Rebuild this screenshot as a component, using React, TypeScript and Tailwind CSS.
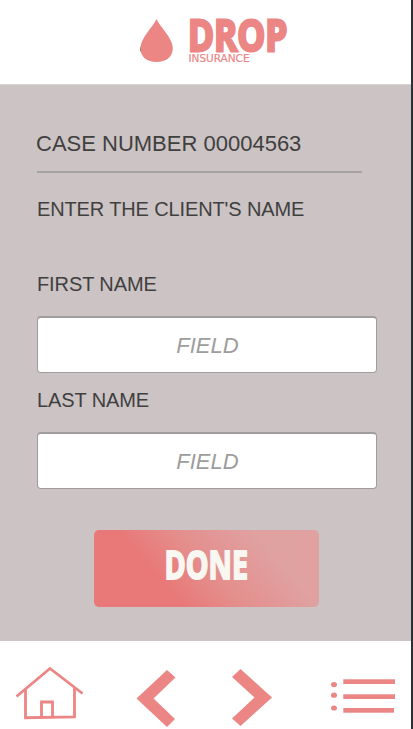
import React from "react";

const pink = "#eb8685";

function Logo() {
  return (
    <svg className="block h-[84px] w-full" viewBox="0 0 411 84" fill={pink}>
      <path d="M140.300 46v5l3 4z" fill="#444" />
      <path d="M156.500 19C160 27 172.800 38 172.800 48C172.800 57 166 62 156.500 62C147 62 140.500 57 140.500 48C140.500 38 153 27 156.500 19Z" />
      <text x="188" y="51.200" fontFamily="'Open Sans', sans-serif" fontWeight="700" fontSize="43.500" textLength="99.500" lengthAdjust="spacingAndGlyphs" stroke={pink} strokeWidth="2.800">DROP</text>
      <text x="188.500" y="62" fontFamily="'DejaVu Sans', sans-serif" fontSize="11" textLength="61" lengthAdjust="spacingAndGlyphs" stroke={pink} strokeWidth="0.2">INSURANCE</text>
    </svg>
  );
}

function Field({ label, className }: { label: string; className: string }) {
  return (
    <div className={className}>
      <label className="block h-6 text-[20px] leading-6 tracking-[-0.1px]">{label}</label>
      <input
        className="mt-5 block h-[57px] w-[340px] rounded-[4px] border border-t-2 border-[#a09c9d] bg-white pt-[2px] pl-[1px] text-center text-[22px] italic text-[#444] outline-none placeholder:text-[#9d9d9d] placeholder:opacity-100"
        placeholder="FIELD"
        aria-label={label}
      />
    </div>
  );
}

export default function App() {
  return (
    <div className="flex h-[729px] w-[413px] flex-col overflow-hidden border-r-2 border-[#2d3033] bg-white font-['Liberation_Sans',Arial,sans-serif] text-[#40403f]">
      <header className="h-[84px] shrink-0">
        <Logo />
      </header>
      <main className="h-[557px] shrink-0 border-t border-[#d8d1d1] bg-[#ccc3c4] pl-[37px]">
        <h1 className="mt-[45px] h-[43px] w-[325px] border-b-2 border-[#a5a4a3] text-[22px] leading-[28px] -indent-px">
          CASE NUMBER 00004563
        </h1>
        <p className="mt-[24px] h-6 text-[20px] leading-6 tracking-[-0.13px]">ENTER THE CLIENT'S NAME</p>
        <Field label="FIRST NAME" className="mt-[51px]" />
        <Field label="LAST NAME" className="mt-[15px]" />
        <button
          className="ml-[57px] mt-[41px] block h-[77px] w-[225px] rounded-[5px] bg-[linear-gradient(49deg,#e87978_0%,#e87978_31%,#e48e8c_50%,#e0a1a1_77%,#e0a1a1_100%)]"
          aria-label="Done"
        >
          <svg className="block" width="225" height="77" fill="#f8f7f2">
            <text x="70.500" y="49.200" fontFamily="'Open Sans', sans-serif" fontWeight="700" fontSize="39.500" textLength="83.500" lengthAdjust="spacingAndGlyphs" stroke="#f8f7f2" strokeWidth="2">DONE</text>
          </svg>
        </button>
      </main>
      <nav className="h-[88px] shrink-0">
        <svg className="block" width="411" height="88" viewBox="0 641 411 88" fill={pink}>
          <g fill="none" stroke={pink}>
            <path d="M16.500 696.500L50 668.500L82.500 693.500" strokeWidth="2.800" />
            <path d="M25.500 689V717.700L74.500 716.800V688" strokeWidth="2.800" />
            <path d="M41.500 717V702H52.500V717" strokeWidth="2.800" />
          </g>
          <path d="M167 670L175.500 677.500L153.500 698.500L175 719L167 727L136.500 698.500Z" />
          <path d="M240.500 669L272 697.500L240.500 726L232 718.500L254.500 697.500L232 677Z" />
          <ellipse cx="334" cy="684.600" rx="3" ry="2.600" />
          <ellipse cx="334" cy="695.200" rx="3" ry="2.600" />
          <ellipse cx="334" cy="708" rx="3" ry="2.600" />
          <rect x="343.300" y="679.300" width="51.700" height="4.700" />
          <rect x="343.300" y="694.300" width="51.700" height="4.700" />
          <rect x="343.300" y="708" width="50.700" height="4.700" />
        </svg>
      </nav>
    </div>
  );
}
